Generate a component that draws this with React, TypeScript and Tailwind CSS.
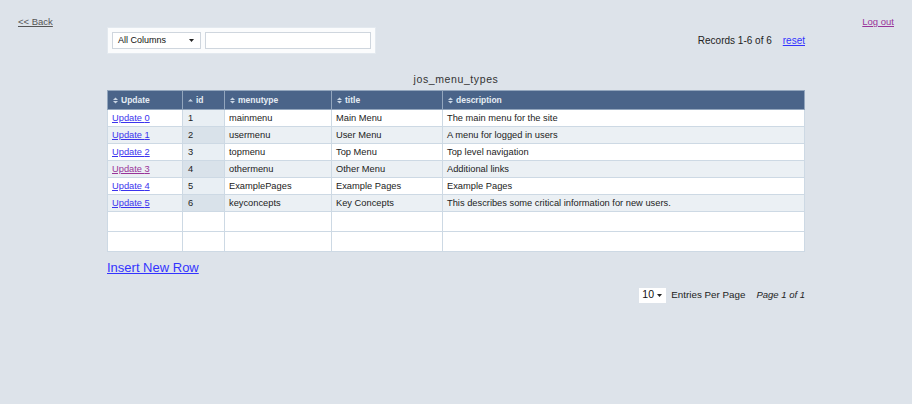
import React from 'react';

type Row = { id: number; menutype: string; title: string; description: string; visited?: boolean };

const ROWS: Row[] = [
  { id: 1, menutype: 'mainmenu', title: 'Main Menu', description: 'The main menu for the site' },
  { id: 2, menutype: 'usermenu', title: 'User Menu', description: 'A menu for logged in users' },
  { id: 3, menutype: 'topmenu', title: 'Top Menu', description: 'Top level navigation' },
  { id: 4, menutype: 'othermenu', title: 'Other Menu', description: 'Additional links', visited: true },
  { id: 5, menutype: 'ExamplePages', title: 'Example Pages', description: 'Example Pages' },
  { id: 6, menutype: 'keyconcepts', title: 'Key Concepts', description: 'This describes some critical information for new users.' },
];

const COLUMNS = [
  { key: 'update', label: 'Update', width: 'w-[75px]' },
  { key: 'id', label: 'id', width: 'w-[42px]', sorted: true },
  { key: 'menutype', label: 'menutype', width: 'w-[107px]' },
  { key: 'title', label: 'title', width: 'w-[111px]' },
  { key: 'description', label: 'description', width: 'w-[362px]' },
];

function SortIcon({ up }: { up?: boolean }) {
  if (up) {
    return (
      <svg width="5" height="7" viewBox="0 0 5 7" className="shrink-0">
        <polygon points="0,4.5 2.5,2 5,4.5" fill="#c9d5e3" />
      </svg>
    );
  }
  return (
    <svg width="5" height="7" viewBox="0 0 5 7" className="shrink-0">
      <polygon points="0,3 2.5,0.5 5,3" fill="#c9d5e3" />
      <polygon points="0,4 5,4 2.5,6.5" fill="#c9d5e3" />
    </svg>
  );
}

function Caret() {
  return (
    <svg width="5" height="3" viewBox="0 0 5 3" className="shrink-0">
      <polygon points="0,0 5,0 2.5,3" fill="#222" />
    </svg>
  );
}

export default function App() {
  const cell = 'border border-[#cdd9e4] pl-[4px] h-[17px] leading-[15px] align-middle whitespace-nowrap';
  return (
    <div className="min-h-[404px] w-full bg-[#dde3ea] font-['Liberation_Sans',Arial,sans-serif] text-[#222]">
      <div className="flex justify-between px-[18px] pt-[16px] h-[27px] text-[9.5px] leading-[11px]">
        <a href="#" className="text-[#555] underline">&lt;&lt; Back</a>
        <a href="#" className="text-[#993399] underline">Log out</a>
      </div>

      <div className="w-[698px] mx-auto">
        <div className="flex items-center justify-between h-[27px]">
          <div className="flex items-center gap-[4px] w-[269px] h-[27px] px-[4px] bg-[#fbfcfd] border border-[#e3e9ef]">
            <div className="flex items-center justify-between w-[89px] h-[17px] pl-[5px] pr-[6px] bg-white border border-[#cfd6de] text-[9px] text-[#111]">
              <span>All Columns</span>
              <Caret />
            </div>
            <div className="flex-1 h-[17px] bg-white border border-[#cfd6de]" />
          </div>
          <div className="flex items-center text-[10px] text-[#222]">
            <span>Records 1-6 of 6</span>
            <a href="#" className="ml-[11px] text-[#3333ff] underline">reset</a>
          </div>
        </div>

        <div className="mt-[18px] mb-[4px] text-center text-[10.5px] leading-[14px] tracking-[0.6px] text-[#333]">
          jos_menu_types
        </div>

        <table className="table-fixed border-collapse w-[698px] border border-[#eef2f6] text-[9.3px]">
          <colgroup>
            {COLUMNS.map((c) => (
              <col key={c.key} className={c.width} />
            ))}
          </colgroup>
          <thead>
            <tr>
              {COLUMNS.map((c) => (
                <th
                  key={c.key}
                  className="bg-[#4a6489] border border-[#93a6bd] h-[19px] pl-[5px] text-left font-bold text-[8.5px] text-[#e6edf4]"
                >
                  <div className="flex items-center gap-[3px]">
                    <SortIcon up={c.sorted} />
                    <span>{c.label}</span>
                  </div>
                </th>
              ))}
            </tr>
          </thead>
          <tbody>
            {ROWS.map((r, i) => {
              const alt = i % 2 === 1;
              const bg = alt ? 'bg-[#ebf0f4]' : 'bg-white';
              const idBg = alt ? 'bg-[#d9e2ea]' : 'bg-[#e9eff4]';
              return (
                <tr key={r.id}>
                  <td className={`${cell} ${bg}`}>
                    <a href="#" className={`underline ${r.visited ? 'text-[#993399]' : 'text-[#3b33ee]'}`}>
                      Update {i}
                    </a>
                  </td>
                  <td className={`${cell} ${idBg} pl-[5px]`}>{r.id}</td>
                  <td className={`${cell} ${bg}`}>{r.menutype}</td>
                  <td className={`${cell} ${bg}`}>{r.title}</td>
                  <td className={`${cell} ${bg}`}>{r.description}</td>
                </tr>
              );
            })}
            {[0, 1].map((k) => (
              <tr key={`empty-${k}`}>
                {COLUMNS.map((c) => (
                  <td key={c.key} className="border border-[#cdd9e4] bg-white h-[20px]" />
                ))}
              </tr>
            ))}
          </tbody>
        </table>

        <div className="mt-[8px] text-[13px] leading-[16px]">
          <a href="#" className="text-[#3333ff] underline">Insert New Row</a>
        </div>

        <div className="flex items-center justify-end mt-[11px] h-[16px] text-[9.8px]">
          <div className="flex items-center justify-between w-[27px] h-[15px] pl-[3px] pr-[4px] bg-white text-[10.5px] text-[#111]">
            <span>10</span>
            <Caret />
          </div>
          <span className="ml-[5px]">Entries Per Page</span>
          <span className="ml-[11px] italic text-[9.5px]">Page 1 of 1</span>
        </div>
      </div>
    </div>
  );
}
